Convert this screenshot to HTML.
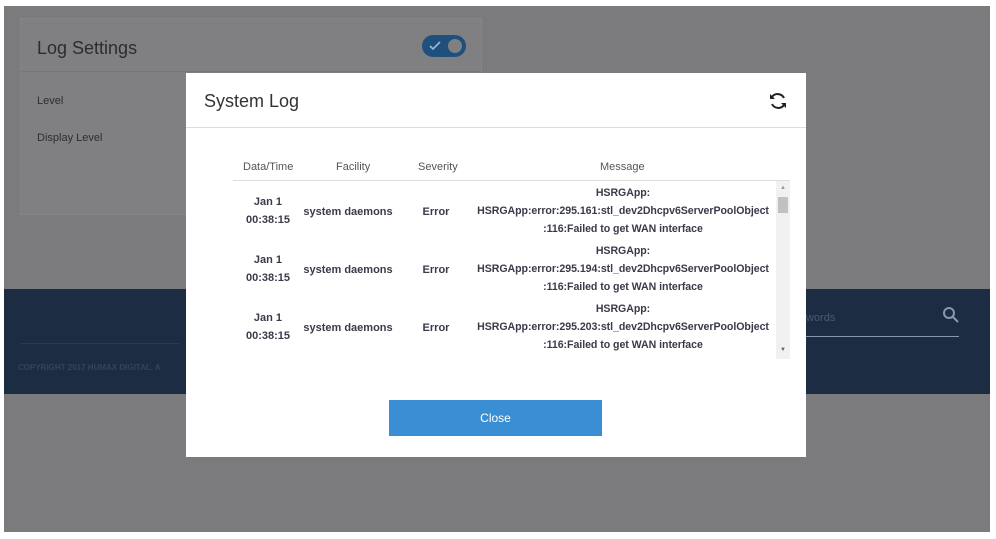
<!DOCTYPE html>
<html><head><style>
*{margin:0;padding:0;box-sizing:border-box}
body{width:996px;height:539px;background:#fff;font-family:"Liberation Sans",sans-serif;position:relative;overflow:hidden}
.bg{position:absolute;left:4px;top:6px;width:986px;height:526px;background:#7b7b7d}
.card{position:absolute;left:20px;top:18px;width:462px;height:197px;background:#808082;border:1px solid #858587}
.card .t{position:absolute;left:16px;top:19px;font-size:18px;color:#2c2c2e}
.card .hl{position:absolute;left:0;top:52px;width:100%;height:1px;background:#767678}
.card .l{position:absolute;left:16px;font-size:11px;color:#2e2e30}
.tog{position:absolute;left:401px;top:16px;width:44px;height:22px;border-radius:11px;background:#1f4f7d}
.tog .k{position:absolute;right:2px;top:2px;width:18px;height:18px;border-radius:50%;background:#808082;border:2px solid #1f4f7d}
.navy{position:absolute;left:4px;top:289px;width:986px;height:105px;background:#1c2c43}
.copy{position:absolute;left:18px;top:363px;font-size:8px;color:#34445a;font-weight:bold}
.navy .ln{position:absolute;left:16px;top:54px;width:160px;height:1px;background:#2b3b52}
.srch{position:absolute;left:806px;top:336px;width:153px;height:1px;background:#8a97a8}
.sw{position:absolute;left:806px;top:312px;font-size:11px;color:#4a5a70}
.modal{position:absolute;left:186px;top:73px;width:620px;height:384px;background:#fff}
.mt{position:absolute;left:18px;top:18px;font-size:18px;color:#333}
.mh{position:absolute;left:0;top:54px;width:100%;height:1px;background:#ddd}
.th{position:absolute;top:88px;font-size:11px;color:#555;text-align:center}
.tl{position:absolute;left:47px;top:107px;width:557px;height:1px;background:#ddd}
.cell{position:absolute;font-size:11px;font-weight:bold;color:#3a3a4a;text-align:center;line-height:18px}
.msg{font-size:10.6px;letter-spacing:-0.05px}
.sb{position:absolute;left:590px;top:108px;width:14px;height:178px;background:#f1f1f1}
.btn{position:absolute;left:203px;top:327px;width:213px;height:36px;background:#3a8fd4;color:#fff;font-size:12px;text-align:center;line-height:36px}
</style></head><body>
<div class="bg"></div>
<div class="card"><div class="t">Log Settings</div><div class="hl"></div>
<div class="tog"><svg style="position:absolute;left:7px;top:6px" width="12" height="10"><path d="M1 5l3 3 7-7" stroke="#9fb8d0" stroke-width="1.6" fill="none"/></svg><div class="k"></div></div>
<div class="l" style="top:76px">Level</div><div class="l" style="top:113px">Display Level</div></div>
<div class="navy"><div class="ln"></div></div>
<div class="copy">COPYRIGHT 2017 HUMAX DIGITAL. A</div>
<div class="sw">words</div><div class="srch"></div>
<svg style="position:absolute;left:942px;top:306px" width="18" height="18"><circle cx="7" cy="7" r="5" stroke="#8a97a8" stroke-width="2" fill="none"/><path d="M11 11l5 5" stroke="#8a97a8" stroke-width="2"/></svg>
<div class="modal">
<div class="mt">System Log</div>
<svg style="position:absolute;left:582px;top:18px" width="20" height="20" viewBox="0 0 20 20"><path d="M16 7A7 7 0 0 0 4 6M4 13a7 7 0 0 0 12 1" stroke="#222" stroke-width="2" fill="none"/><path d="M2 3v5h5z M18 17v-5h-5z" fill="#222"/></svg>
<div class="mh"></div>
<div class="th" style="left:57px">Data/Time</div>
<div class="th" style="left:150px">Facility</div>
<div class="th" style="left:232px">Severity</div>
<div class="th" style="left:414px">Message</div>
<div class="tl"></div>
<div class="sb"><div style="position:absolute;left:2px;top:16px;width:10px;height:16px;background:#c1c1c1"></div>
<div style="position:absolute;left:4px;top:4px;font-size:6px;color:#999">▲</div><div style="position:absolute;left:4px;top:166px;font-size:6px;color:#666">▼</div></div>
<div class="cell" style="left:50px;top:120px;width:64px">Jan 1<br>00:38:15</div>
<div class="cell" style="left:112px;top:130px;width:100px">system daemons</div>
<div class="cell" style="left:230px;top:130px;width:40px">Error</div>
<div class="cell msg" style="left:284px;top:111px;width:306px">HSRGApp:<br>HSRGApp:error:295.161:stl_dev2Dhcpv6ServerPoolObject<br>:116:Failed to get WAN interface</div>
<div class="cell" style="left:50px;top:178px;width:64px">Jan 1<br>00:38:15</div>
<div class="cell" style="left:112px;top:188px;width:100px">system daemons</div>
<div class="cell" style="left:230px;top:188px;width:40px">Error</div>
<div class="cell msg" style="left:284px;top:169px;width:306px">HSRGApp:<br>HSRGApp:error:295.194:stl_dev2Dhcpv6ServerPoolObject<br>:116:Failed to get WAN interface</div>
<div class="cell" style="left:50px;top:236px;width:64px">Jan 1<br>00:38:15</div>
<div class="cell" style="left:112px;top:246px;width:100px">system daemons</div>
<div class="cell" style="left:230px;top:246px;width:40px">Error</div>
<div class="cell msg" style="left:284px;top:227px;width:306px">HSRGApp:<br>HSRGApp:error:295.203:stl_dev2Dhcpv6ServerPoolObject<br>:116:Failed to get WAN interface</div>
<div class="btn">Close</div>
</div>
</body></html>
